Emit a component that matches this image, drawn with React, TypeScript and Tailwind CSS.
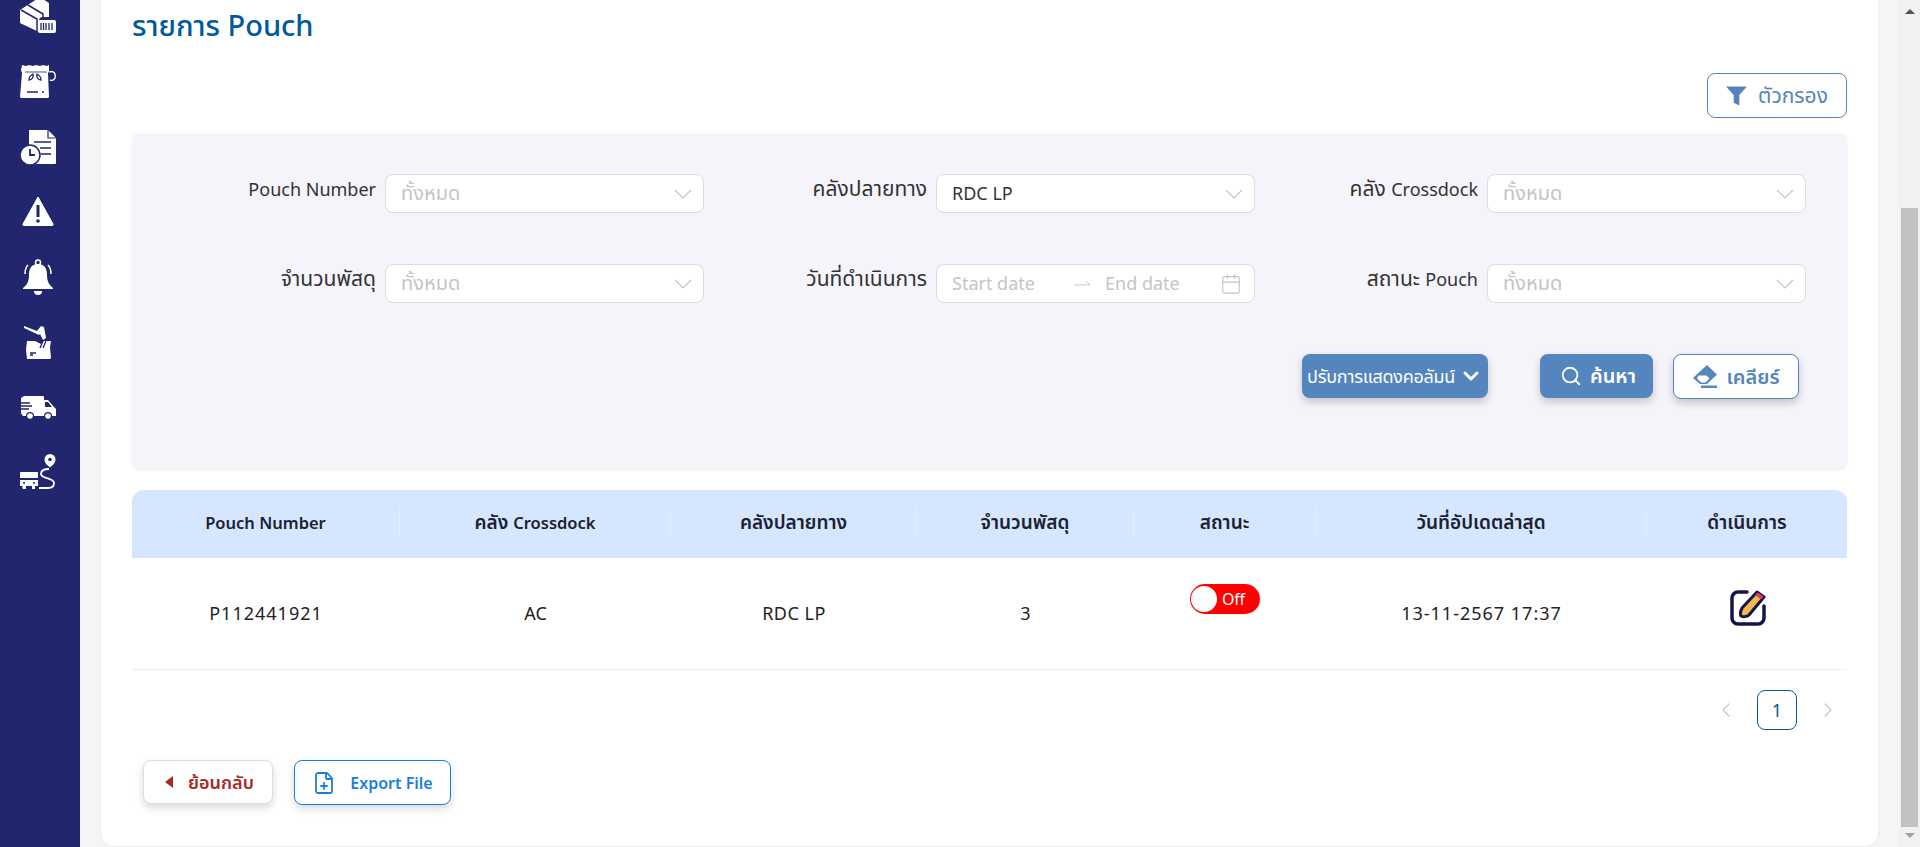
import type { ReactNode } from "react";
import { Calendar, ChevronDown, ChevronLeft, ChevronRight, FilePlus, Search } from "lucide-react";

const latin = "text-[16.5px]";

const columns: { label: ReactNode; value: string | null }[] = [
	{ label: <span className={latin}>Pouch Number</span>, value: "P112441921" },
	{ label: <>คลัง <span className={latin}>Crossdock</span></>, value: "AC" },
	{ label: "คลังปลายทาง", value: "RDC LP" },
	{ label: "จำนวนพัสดุ", value: "3" },
	{ label: "สถานะ", value: null },
	{ label: "วันที่อัปเดตล่าสุด", value: "13-11-2567 17:37" },
	{ label: "ดำเนินการ", value: null },
];

function BoxIcon() {
	return (
		<svg viewBox="0 0 36 36" className="h-9 w-9" fill="white">
			<path d="M0 11 20-2l9 6v14h-6a4 4 0 0 0-4 4v11L2 25a2 2 0 0 1-2-2z" />
			<path d="M1 11l16 9v13M8 6l15 9v6" fill="none" stroke="#22266f" strokeWidth="1.5" />
			<rect x="18" y="21" width="18" height="13" rx="2" />
			<path d="M21 24v7M23.500 24v7M26 24v7M29 24v7M32 24v7" stroke="#22266f" strokeWidth="1.300" />
		</svg>
	);
}

function BagIcon() {
	return (
		<svg viewBox="0 0 36 36" className="h-9 w-9" fill="white">
			<path d="M2 1l4 1 3-1 4 1 3-1 4 1 3-1 4 1 2-1 0 6-1 2 1 24-1 1H1l-1-1 2-24-1-3z" />
			<path d="M29 8c5-2 7 2 6 6-1 2-3 3-5 2" fill="none" stroke="white" strokeWidth="1.400" />
			<path d="M5 8h22" stroke="#22266f" strokeWidth="0.800" />
			<path d="M9 16c0-3 2-5 4-6 1 3-1 6-4 6zM21 16c0-3-2-5-4-6-1 3 1 6 4 6z" fill="none" stroke="#22266f" strokeWidth="1.300" />
			<path d="M7 28h11M22 28h2" stroke="#22266f" strokeWidth="1.400" />
		</svg>
	);
}

function DocClockIcon() {
	return (
		<svg viewBox="0 0 36 36" className="h-9 w-9" fill="white">
			<path d="M9 1h19l8 8v25a1 1 0 0 1-1 1H9z" />
			<path d="M28 1v8h8" fill="none" stroke="#22266f" strokeWidth="1.200" />
			<path d="M14 13h17M20 19h11M21 25h10" stroke="#22266f" strokeWidth="1.600" />
			<circle cx="10" cy="26" r="10" stroke="#22266f" strokeWidth="1.500" />
			<path d="M10 20v6h5" fill="none" stroke="#22266f" strokeWidth="1.800" />
		</svg>
	);
}

function WarningIcon() {
	return (
		<svg viewBox="0 0 36 36" className="h-9 w-9" fill="white">
			<path d="M18 3 33 30a1 1 0 0 1-1 1.500H4A1 1 0 0 1 3 30z" stroke="white" strokeLinejoin="round" strokeWidth="1" />
			<path d="M18 11v12" stroke="#22266f" strokeWidth="3" />
			<circle cx="18" cy="27" r="1.800" fill="#22266f" />
		</svg>
	);
}

function BellIcon() {
	return (
		<svg viewBox="0 0 36 36" className="h-9 w-9" fill="white">
			<circle cx="18" cy="3.500" r="2.500" fill="none" stroke="white" strokeWidth="1.500" />
			<path d="M18 5c-7 0-9 5-9 11 0 6-2 10-6 13v1h30v-1c-4-3-6-7-6-13 0-6-2-11-9-11z" />
			<path d="M14 32h8a4 4 0 0 1-8 0z" />
			<path d="M5 15c0-4 1-7 3-9M31 15c0-4-1-7-3-9" fill="none" stroke="white" strokeWidth="1.500" />
		</svg>
	);
}

function HammerIcon() {
	return (
		<svg viewBox="0 0 36 36" className="h-9 w-9" fill="white">
			<path d="M4 2l13 5 4-5 3 1 2 11-3 2-3-6-1 1L4 4z" />
			<path d="M7 17h8l6 3 3-3h7l-1 6 1 11-1 1H7l-1-9z" />
			<path d="M23 17l-3 7M26 17l-3 7M10 29h6M10 31h3" stroke="#22266f" strokeWidth="1.300" />
		</svg>
	);
}

function VanIcon() {
	return (
		<svg viewBox="0 0 36 24" className="h-6 w-9" fill="white">
			<path d="M4 1h19a1 1 0 0 1 1 1v3h4l6 7 2 2v7h-4a4 4 0 0 0-8 0H14a4 4 0 0 0-8 0H3l-2-3V3z" />
			<circle cx="10" cy="21" r="2.800" />
			<circle cx="28" cy="21" r="2.800" />
			<path d="M25 7h3l4 5h-7z" fill="#22266f" />
			<path d="M0 8h10M1 11h11M0 14h9" stroke="#22266f" strokeWidth="1.300" />
		</svg>
	);
}

function TruckRouteIcon() {
	return (
		<svg viewBox="0 0 36 36" className="h-9 w-9" fill="white">
			<path d="M30 0a5.500 5.500 0 0 0-5.500 5.500C24.500 9 28 12 30 13.500c2-1.500 5.500-4.500 5.500-8A5.500 5.500 0 0 0 30 0z" />
			<circle cx="30" cy="5.500" r="1.800" fill="#22266f" />
			<path d="M29 15c-5 0-8 2-8 5 0 5 13 3 13 9 0 4-3 5-6 5h-9" fill="none" stroke="white" strokeWidth="1.800" />
			<path d="M1 18h16a1 1 0 0 1 1 1v5H0v-5a1 1 0 0 1 1-1zM0 26h18v6H0z" />
			<path d="M3 35a2 2 0 0 1 0-3h3v3zM12 32h3v3h-3z" />
			<path d="M3 29h2M13 29h2" stroke="#22266f" strokeWidth="1.500" />
		</svg>
	);
}

function EraserIcon() {
	return (
		<svg viewBox="0 0 26 24" className="h-6 w-[26px]" fill="#5585bd">
			<path d="M15 0 25 9.500 15 19H8L1 13z" />
			<path d="M6.500 10.500h8l3 3-4 4H9l-4-4z" fill="white" />
			<path d="M9 20.500h16V23H9z" />
		</svg>
	);
}

function EditIcon() {
	return (
		<svg viewBox="0 0 36 37" className="h-[37px] w-9">
			<path d="M17 3H8a6 6 0 0 0-6 6v20a6 6 0 0 0 6 6h20a6 6 0 0 0 6-6V17" fill="none" stroke="#14144f" strokeWidth="3.500" strokeLinecap="round" />
			<path d="M27 3l7 5-15 18c-2 2-7 2-8 1-1-2 0-6 1-8z" fill="#f5b94a" stroke="#14144f" strokeWidth="3" strokeLinejoin="round" />
			<path d="M28 3.500l5.500 4-2.500 3-6-4.500z" fill="#ea3b5a" />
		</svg>
	);
}

function DropdownArrow() {
	return (
		<svg viewBox="0 0 18 10" className="h-[10px] w-[18px]" fill="none" stroke="#c4c4c4" strokeWidth="1.200">
			<path d="M1 1l8 8 8-8" />
		</svg>
	);
}

function FilterField({ label, value }: { label: ReactNode; value?: string }) {
	return (
		<div className="flex">
			<div className="flex-1 pr-[9px] text-right text-[21px] leading-[28px] text-[#333]">{label}</div>
			<div className="flex h-[39px] w-[319px] items-center justify-between rounded-lg border border-[#dcdce0] bg-white pl-[15px] pr-[11px]">
				{value ? <span className="text-[18px] text-[#333]">{value}</span> : <span className="-mt-[2px] text-[20px] text-[#c4c4c4]">ทั้งหมด</span>}
				<DropdownArrow />
			</div>
		</div>
	);
}

function DateField({ label }: { label: string }) {
	return (
		<div className="flex">
			<div className="flex-1 pr-[9px] text-right text-[21px] leading-[28px] text-[#333]">{label}</div>
			<div className="flex h-[39px] w-[319px] items-center rounded-lg border border-[#dcdce0] bg-white pl-[15px] pr-[12px] text-[18px] text-[#c4c4c4]">
				<span className="w-[122px]">Start date</span>
				<svg viewBox="0 0 18 8" className="mr-[14px] h-2 w-[17px]" fill="none" stroke="#c4c4c4" strokeWidth="1">
					<path d="M0 5h17l-4-4" />
				</svg>
				<span className="flex-1">End date</span>
				<Calendar className="h-[22px] w-[22px]" strokeWidth={1.2} />
			</div>
		</div>
	);
}

export default function App() {
	return (
		<div className="flex h-[847px] overflow-hidden bg-[#f5f5f5] font-['Noto_Sans','Noto_Sans_Thai',sans-serif]">
			<aside className="h-full w-[80px] shrink-0 bg-[#22266f] pr-[5px]">
				<div className="-mt-[16px]">
					{[<BoxIcon />, <BagIcon />, <DocClockIcon />, <WarningIcon />, <BellIcon />, <HammerIcon />, <VanIcon />, <TruckRouteIcon />].map((icon, index) => (
						<div key={index} className="flex h-[65px] items-center justify-center">
							{icon}
						</div>
					))}
				</div>
			</aside>

			<main className="ml-[21px] h-[846px] w-[1777px] shrink-0 rounded-b-xl bg-white px-[31px] shadow-[0_0_2px_rgba(0,0,0,0.12)]">
				<h1 className="flex h-[49px] items-center text-[29px] font-medium text-[#005a9c]">รายการ Pouch</h1>

				<div className="mt-[24px] flex justify-end">
					<button type="button" className="flex h-[45px] w-[140px] items-center justify-center gap-[11px] rounded-lg border border-[#5585bd] bg-white text-[21px] text-[#5585bd]">
						<svg viewBox="0 0 22 20" className="h-[20px] w-[21px]" fill="#5585bd">
							<path d="M0 0h22l-8 9v11l-6-3V9z" />
						</svg>
						ตัวกรอง
					</button>
				</div>

				<section className="mt-[15px] h-[336px] rounded-lg bg-[#f4f4fa] pl-[21px] pr-[41px] pt-[41px] shadow-[0_1px_3px_rgba(0,0,0,0.08)]">
					<div className="grid grid-cols-3 gap-y-[51px]">
						<FilterField label={<span className="text-[18px]">Pouch Number</span>} />
						<FilterField label="คลังปลายทาง" value="RDC LP" />
						<FilterField label={<>คลัง <span className="text-[18px]">Crossdock</span></>} />
						<FilterField label="จำนวนพัสดุ" />
						<DateField label="วันที่ดำเนินการ" />
						<FilterField label={<>สถานะ <span className="text-[18px]">Pouch</span></>} />
					</div>
					<div className="mr-[7px] mt-[51px] flex justify-end">
						<button type="button" className="flex h-[44px] w-[186px] items-center justify-center gap-1 rounded-lg bg-[#5585bd] text-[18px] tracking-[-0.3px] text-white shadow-[0_4px_8px_rgba(0,0,0,0.2)]">
							ปรับการแสดงคอลัมน์
							<ChevronDown className="h-6 w-6" strokeWidth={3} />
						</button>
						<button type="button" className="ml-[52px] flex h-[44px] w-[113px] items-center justify-center gap-[8px] rounded-lg bg-[#5585bd] pl-[3px] text-[20px] font-semibold text-white shadow-[0_4px_8px_rgba(0,0,0,0.2)]">
							<Search className="h-[22px] w-[22px]" strokeWidth={2} />
							ค้นหา
						</button>
						<button type="button" className="ml-[20px] flex h-[45px] w-[126px] items-center justify-center gap-[8px] rounded-lg border border-[#5585bd] bg-white text-[20px] font-semibold text-[#5585bd] shadow-[0_4px_8px_rgba(0,0,0,0.2)]">
							<EraserIcon />
							เคลียร์
						</button>
					</div>
				</section>

				<div className="mt-[21px]">
					<div className="grid h-[68px] grid-cols-[268px_271px_246px_217px_182px_331px_200px] items-center rounded-t-xl bg-[#d6e6fe]">
						{columns.map((column, index) => (
							<div key={index} className={index < columns.length - 1 ? "-mt-[3px] flex h-[30px] items-center justify-center border-r border-[#e6eefc] text-[19px] font-semibold text-[#1a2233]" : "-mt-[3px] flex h-[30px] items-center justify-center text-[19px] font-semibold text-[#1a2233]"}>
								<span>{column.label}</span>
							</div>
						))}
					</div>
					<div className="grid h-[112px] grid-cols-[268px_271px_246px_217px_182px_331px_200px] items-center border-b border-[#eeeeee] text-[18px] text-[#222]">
						<div className="text-center tracking-[1px]">P112441921</div>
						<div className="text-center">AC</div>
						<div className="text-center tracking-[0.5px]">RDC LP</div>
						<div className="text-center">3</div>
						<div className="-mt-[29px] flex justify-center">
							<div className="flex h-[30px] w-[70px] items-center rounded-full bg-[#ff0000] pl-[1px] text-[16px] tracking-[-0.3px] text-white">
								<span className="h-[26px] w-[26px] rounded-full bg-white" />
								<span className="ml-[5px] -mt-[1px]">Off</span>
							</div>
						</div>
						<div className="text-center tracking-[1px]">13-11-2567 17:37</div>
						<div className="-mt-[12px] flex justify-center pl-[1px]">
							<EditIcon />
						</div>
					</div>
				</div>

				<div className="mt-[20px] flex h-[40px] items-center justify-end pr-[7px]">
					<ChevronLeft className="h-6 w-6 text-[#c4c4c4]" strokeWidth={1.2} />
					<div className="mx-[19px] flex h-[40px] w-[40px] items-center justify-center rounded-lg border border-[#005a9c] text-[18px] text-[#005a9c]">1</div>
					<ChevronRight className="h-6 w-6 text-[#c4c4c4]" strokeWidth={1.2} />
				</div>

				<div className="mt-[30px] flex pl-[11px]">
					<button type="button" className="flex h-[44px] w-[130px] items-center justify-center gap-[15px] rounded-lg border border-[#ddd] bg-white pl-[3px] text-[18px] font-semibold text-[#a52a2a] shadow-[0_4px_8px_rgba(0,0,0,0.15)]">
						<svg viewBox="0 0 8 12" className="h-[12px] w-[8px]" fill="#a52a2a">
							<path d="M8 0v12L0 6z" />
						</svg>
						ย้อนกลับ
					</button>
					<button type="button" className="ml-[21px] flex h-[45px] w-[157px] items-center justify-center gap-[14px] rounded-lg border border-[#1a7fdc] bg-white text-[16px] font-semibold text-[#1a7fdc] shadow-[0_4px_8px_rgba(0,0,0,0.15)]">
						<FilePlus className="h-6 w-6" strokeWidth={1.8} />
						Export File
					</button>
				</div>
			</main>

			<div className="ml-[21px] flex h-full w-[21px] shrink-0 flex-col items-center bg-[#f1f1f1] pt-[9px]">
				<div className="h-0 w-0 border-x-[5px] border-b-[5px] border-x-transparent border-b-[#505050]" />
				<div className="mt-[194px] h-[619px] w-[17px] bg-[#c1c1c1]" />
				<div className="mt-[6px] h-0 w-0 border-x-[5px] border-t-[5px] border-x-transparent border-t-[#a0a0a0]" />
			</div>
		</div>
	);
}
